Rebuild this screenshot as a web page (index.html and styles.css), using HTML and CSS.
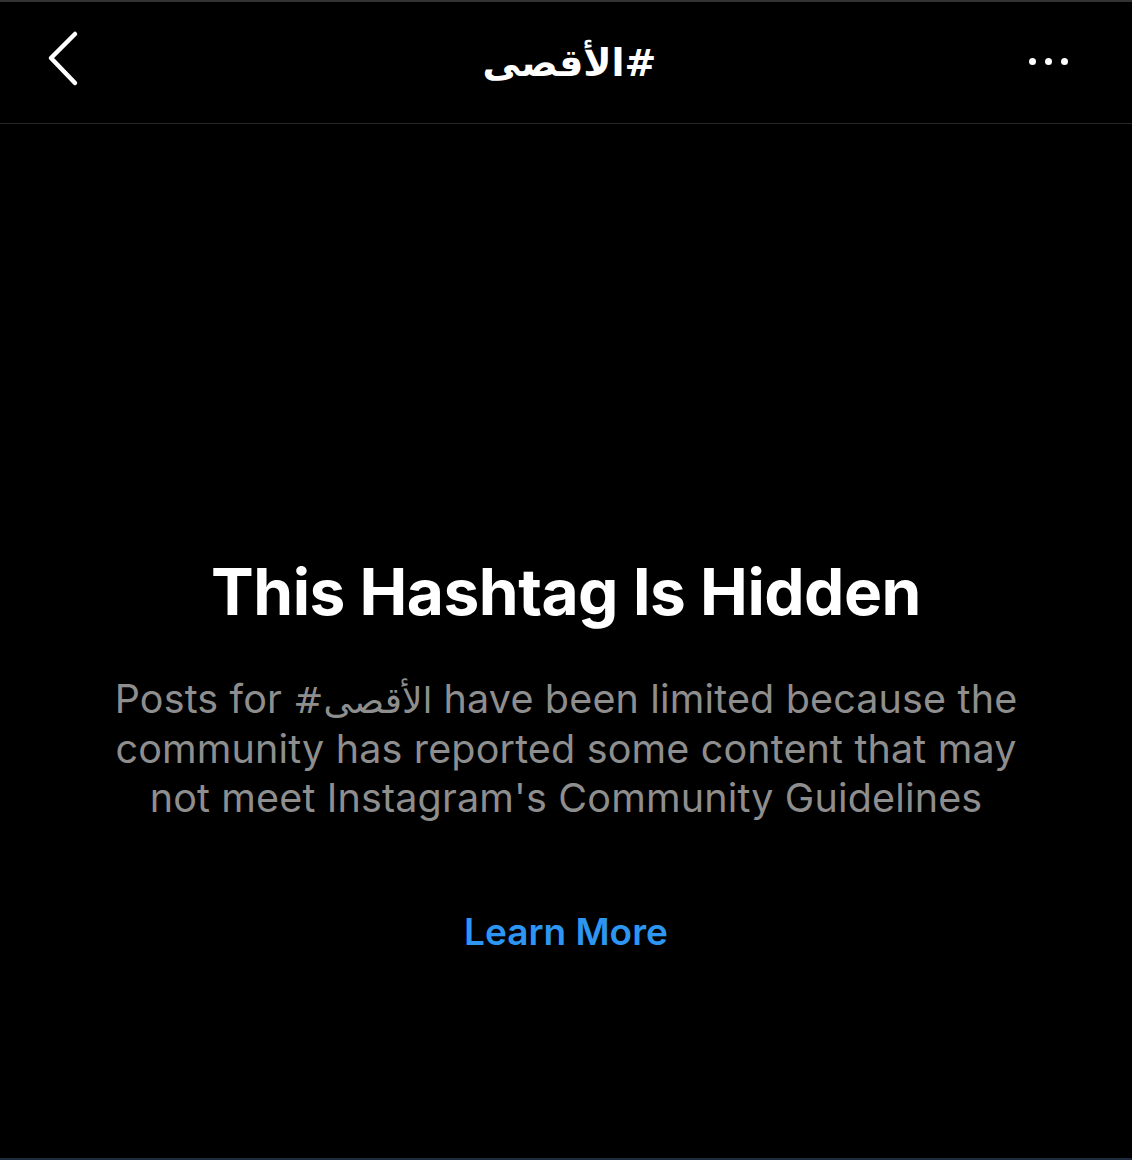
FILE: index.html
```html
<!DOCTYPE html>
<html lang="en">
<head>
    <meta charset="UTF-8">
    <meta name="viewport" content="width=device-width, initial-scale=1.0">
    <title>#الأقصى</title>
    <link rel="stylesheet" href="styles.css">
</head>
<body>
    <div class="screen">
        <header class="topbar">
            <a href="#" class="back-button" aria-label="Back">
                <svg width="40" height="64" viewBox="0 0 40 64">
                    <path d="M31 6 L7 30 L31 55" fill="none" stroke="#fff" stroke-width="4.5" stroke-linecap="round" stroke-linejoin="round"/>
                </svg>
            </a>
            <h1 class="tag-title" dir="rtl">#الأقصى</h1>
            <a href="#" class="more-button" aria-label="More">
                <span class="dot"></span>
                <span class="dot"></span>
                <span class="dot"></span>
            </a>
        </header>

        <main class="hidden-notice">
            <h2 class="notice-title">This Hashtag Is Hidden</h2>
            <p class="notice-text">
                Posts for <span class="tag-inline">#الأقصى</span> have been limited because the<br>
                community has reported some content that may<br>
                not meet Instagram's Community Guidelines
            </p>
            <a href="#" class="learn-more">Learn More</a>
        </main>
    </div>
</body>
</html>
```

FILE: styles.css
```css
html, body {
    margin: 0;
    padding: 0;
    background-color: #000;
}

body {
    font-family: Inter, "Noto Sans", "DejaVu Sans", sans-serif;
    color: #fff;
}

.screen {
    height: 1160px;
    box-sizing: border-box;
    border-top: 2px solid #333;
    border-bottom: 2px solid #1c2a3c;
    display: flex;
    flex-direction: column;
}

.topbar {
    height: 121px;
    border-bottom: 1px solid #262626;
    display: flex;
    align-items: center;
    justify-content: space-between;
    padding: 0 64px 0 44px;
}

.back-button {
    display: flex;
    width: 40px;
    height: 64px;
    margin-top: -6px;
}

.tag-title {
    margin: 0 0 0 26px;
    font-family: "DejaVu Sans", sans-serif;
    font-size: 38px;
    font-weight: bold;
    line-height: 1;
}

.more-button {
    display: flex;
    gap: 9px;
    margin-top: -2px;
}

.dot {
    width: 7px;
    height: 7px;
    border-radius: 50%;
    background-color: #fff;
}

.hidden-notice {
    flex: 1;
    display: flex;
    flex-direction: column;
    align-items: center;
    text-align: center;
    padding-top: 430px;
}

.notice-title {
    margin: 0;
    font-size: 64px;
    font-weight: 700;
    line-height: 1.2;
    letter-spacing: -0.5px;
}

.notice-text {
    margin: 44px 0 0;
    font-size: 39.5px;
    line-height: 49px;
    letter-spacing: 0.15px;
    color: #8e8e8e;
    white-space: nowrap;
}

.tag-inline {
    font-family: "DejaVu Sans", sans-serif;
    font-size: 36px;
    letter-spacing: 0;
}

.learn-more {
    margin-top: 86px;
    font-size: 37px;
    font-weight: 600;
    color: #2d96f2;
    text-decoration: none;
}
```
